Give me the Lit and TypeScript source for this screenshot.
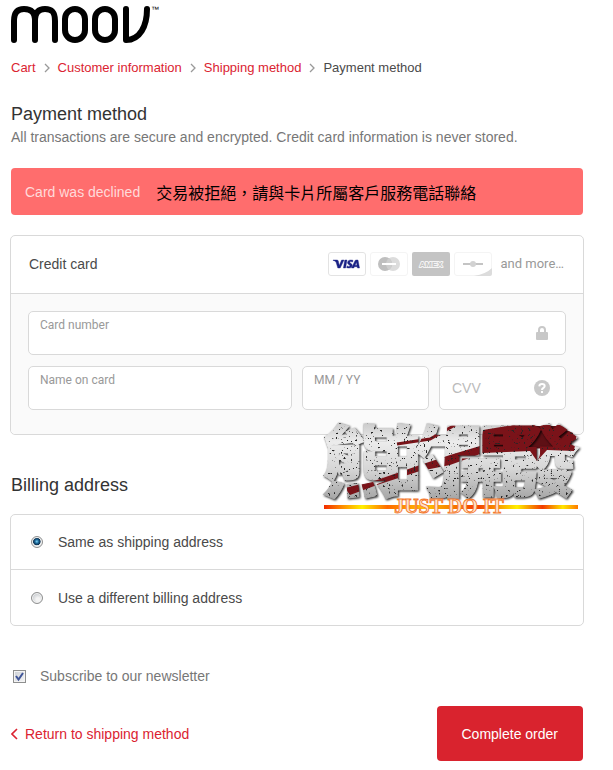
import { LitElement, html, css, svg } from "lit";
import { customElement, property, state } from "lit/decorators.js";

@customElement("crumb-trail")
class CrumbTrail extends LitElement {
  @property({ attribute: false }) steps: string[] = [];

  static styles = css`
    :host {
      display: block;
    }
    .trail {
      display: flex;
      align-items: center;
      gap: 7px;
      font-size: 13px;
      line-height: 20px;
    }
    .link {
      color: #db2331;
      text-decoration: none;
    }
    .current {
      color: #4a4a4a;
    }
    .arrow {
      width: 8px;
      height: 10px;
      fill: none;
      stroke: #999;
      stroke-width: 1.3;
    }
  `;

  render() {
    const last = this.steps.length - 1;
    return html`<nav class="trail" aria-label="Breadcrumb">
      ${this.steps.map((step, i) =>
        i === last
          ? html`<span class="current" aria-current="step">${step}</span>`
          : html`<a class="link" href="#">${step}</a>
              <svg class="arrow" viewBox="0 0 8 10"><path d="M2 1 L6 5 L2 9" /></svg>`
      )}
    </nav>`;
  }
}

@customElement("stamp-mark")
class StampMark extends LitElement {
  static styles = css`
    :host {
      display: block;
    }
    .mark {
      display: block;
      width: 264px;
      height: 100px;
      overflow: visible;
    }
    .glyphs {
      font: 900 78px "Noto Sans CJK TC", sans-serif;
    }
    .motto {
      font: 700 20px "Liberation Serif", serif;
    }
  `;

  render() {
    return html`<svg class="mark" viewBox="0 0 264 100" role="img" aria-label="熊的開發 JUST DO IT">
      ${svg`
      <defs>
        <linearGradient id="metal" x1="0" y1="0" x2="0" y2="1">
          <stop offset="0" stop-color="#bdbdbd" />
          <stop offset="0.3" stop-color="#ececec" />
          <stop offset="0.6" stop-color="#d6d6d6" />
          <stop offset="1" stop-color="#9c9c9c" />
        </linearGradient>
        <pattern id="surface" patternUnits="userSpaceOnUse" x="0" y="0" width="270" height="90">
          <rect width="270" height="90" fill="url(#metal)" />
          <path fill="#7a1319" d="M162 15 L192 10 L239 10 L256 18 L253 36 L226 35 L216 46 L209 36 L162 38 L129 50 L99 56 L56 70 L29 80 L24 73 L56 65 L99 50 L129 40 L159 31 Z" />
          <path fill="none" stroke="#7a1319" stroke-width="3" d="M76 29 L109 24 L134 10" />
        </pattern>
        <linearGradient id="flame" x1="0" x2="1">
          <stop offset="0" stop-color="#f22c00" />
          <stop offset="0.07" stop-color="#ff8a00" />
          <stop offset="0.15" stop-color="#fff000" />
          <stop offset="0.25" stop-color="#ff6a00" />
          <stop offset="0.4" stop-color="#ffc400" />
          <stop offset="0.6" stop-color="#f23a00" />
          <stop offset="0.76" stop-color="#fff000" />
          <stop offset="0.86" stop-color="#f23a00" />
          <stop offset="0.94" stop-color="#ffe600" />
          <stop offset="1" stop-color="#ff7a00" />
        </linearGradient>
        <filter id="worn" x="-0.05" y="-0.1" width="1.1" height="1.2" color-interpolation-filters="sRGB">
          <feTurbulence type="fractalNoise" baseFrequency="0.4" numOctaves="2" seed="7" />
          <feColorMatrix type="matrix" values="0 0 0 0 0.15  0 0 0 0 0.15  0 0 0 0 0.15  0 0 0 14 -9.5" />
          <feComposite in2="SourceAlpha" operator="in" result="specks" />
          <feMerge result="face">
            <feMergeNode in="SourceGraphic" />
            <feMergeNode in="specks" />
          </feMerge>
          <feDropShadow in="face" dx="1" dy="1" stdDeviation="0.8" flood-color="#000" flood-opacity="0.9" />
        </filter>
      </defs>
      <path fill="#5e1015" d="M164 16 L192 11 L236 11 L252 18 L250 32 L226 33 L209 34 L164 36 Z" />
      <text class="glyphs" x="1 61 121 181" y="76" fill="url(#surface)" stroke="url(#surface)" stroke-width="1" filter="url(#worn)">熊的開發</text>
      <rect x="3" y="90" width="254" height="4" fill="url(#flame)" />
      <text class="motto" x="128" y="98" text-anchor="middle" fill="#ffe2c8" stroke="#f47a30" stroke-width="0.9">JUST DO IT</text>
      `}
    </svg>`;
  }
}

@customElement("app-root")
class AppRoot extends LitElement {
  @state() private billing = "same";

  static styles = css`
    :host {
      display: block;
      box-sizing: border-box;
      min-height: 100vh;
      padding: 4px 30px 9px 11px;
      background: #fff;
      color: #4a4a4a;
      font: 14px/20px "Liberation Sans", Arial, sans-serif;
    }
    * {
      box-sizing: border-box;
    }
    .logo {
      display: block;
      width: 150px;
      height: 40px;
      margin-bottom: 14px;
    }
    .stroke {
      fill: none;
      stroke: #000;
      stroke-width: 6;
      stroke-linecap: round;
      stroke-linejoin: round;
    }
    .tm {
      font: 8px "Liberation Sans", Arial, sans-serif;
    }
    .title {
      margin: 0;
      font-size: 18px;
      line-height: 24px;
      font-weight: 400;
      color: #333;
    }
    .pay {
      margin-top: 24px;
    }
    .note {
      margin: 0;
      line-height: 22px;
      color: #777;
    }
    .alert {
      display: flex;
      align-items: center;
      gap: 16px;
      min-height: 47px;
      margin-top: 20px;
      padding: 4px 14px;
      border-radius: 4px;
      background: #ff6d6d;
      color: #ffdada;
    }
    .advice {
      font-family: "Noto Sans CJK TC", sans-serif;
      font-size: 16px;
      line-height: 24px;
      color: #000;
    }
    .panel {
      margin: 20px -1px 0;
      border: 1px solid #d9d9d9;
      border-radius: 5px;
    }
    .head {
      display: flex;
      align-items: center;
      justify-content: space-between;
      height: 58px;
      padding: 0 19px 1px 18px;
      border-bottom: 1px solid #d9d9d9;
    }
    .brands {
      display: flex;
      align-items: center;
      gap: 4px;
    }
    .brand {
      width: 38px;
      height: 24px;
    }
    .amex {
      font: 700 8px "Liberation Sans", Arial, sans-serif;
      fill: #c4c4c4;
      stroke: #f4f4f4;
      stroke-width: 2;
      stroke-linejoin: round;
      paint-order: stroke;
    }
    .more {
      margin-left: 5px;
      font: 13px/20px Roboto, sans-serif;
      color: #999;
    }
    .fields {
      display: grid;
      grid-template-columns: repeat(4, minmax(0, 1fr));
      gap: 11px 10px;
      padding: 17px 17px 24px;
      border-radius: 0 0 5px 5px;
      background: #fafafa;
    }
    .field {
      display: flex;
      align-items: center;
      position: relative;
      height: 44px;
      border: 1px solid #d9d9d9;
      border-radius: 5px;
      background: #fff;
    }
    .wide {
      grid-column: span 4;
    }
    .half {
      grid-column: span 2;
    }
    .caption {
      position: absolute;
      top: 4px;
      left: 11px;
      font: 12px/18px Roboto, sans-serif;
      white-space: nowrap;
      color: #999;
    }
    .input {
      flex: 1;
      min-width: 0;
      height: 42px;
      padding: 0 12px;
      border: 0;
      background: none;
      font: 14px/20px "Liberation Sans", Arial, sans-serif;
      color: #333;
      outline: none;
    }
    .input::placeholder {
      color: #bbb;
      opacity: 1;
    }
    .glyph {
      flex: none;
      width: 16px;
      height: 16px;
      margin-right: 15px;
    }
    .billing {
      position: relative;
      margin-top: 38px;
    }
    .stamp {
      position: absolute;
      right: -2px;
      bottom: -18px;
      z-index: 1;
      pointer-events: none;
    }
    .option {
      display: flex;
      align-items: center;
      gap: 15px;
      height: 54px;
      padding: 0 20px;
    }
    .option + .option {
      height: 56px;
      border-top: 1px solid #d9d9d9;
    }
    .choices {
      margin-top: 17px;
    }
    .radio {
      appearance: none;
      width: 12px;
      height: 12px;
      margin: 0;
      border: 1px solid #8e8f8f;
      border-radius: 50%;
      background: radial-gradient(circle at 60% 65%, #f4f4f4 20%, #c4c8cc 75%);
      box-shadow: inset 0 0 0 1px #f4f4f4;
    }
    .radio:checked {
      background: radial-gradient(circle at 48% 45%, #7fd4f5 0, #1c6a9c 24%, #0d2f4d 46%, #e4e8ea 54%);
    }
    .news {
      display: flex;
      align-items: center;
      gap: 14px;
      margin-top: 40px;
      padding-left: 2px;
      color: #777;
    }
    .tickbox {
      display: grid;
      width: 13px;
      height: 13px;
    }
    .tickbox > * {
      grid-area: 1 / 1;
    }
    .check {
      appearance: none;
      width: 13px;
      height: 13px;
      margin: 0;
      border: 1px solid #8e8f8f;
      background: linear-gradient(135deg, #cbcfd5, #f6f6f6);
      box-shadow: inset 0 0 0 1px #f4f4f4;
    }
    .tick {
      width: 13px;
      height: 13px;
      fill: none;
      stroke: #3f5598;
      stroke-width: 2;
      pointer-events: none;
      visibility: hidden;
    }
    .check:checked + .tick {
      visibility: visible;
    }
    .actions {
      display: flex;
      align-items: center;
      justify-content: space-between;
      margin-top: 20px;
    }
    .back {
      display: flex;
      align-items: center;
      gap: 6px;
      color: #db2331;
      text-decoration: none;
    }
    .chevron {
      width: 8px;
      height: 12px;
      fill: none;
      stroke: #db2331;
      stroke-width: 1.6;
    }
    .submit {
      height: 55px;
      padding: 0 25px;
      border: 0;
      border-radius: 4px;
      background: #d9232e;
      color: #fff;
      font: 14px/20px "Liberation Sans", Arial, sans-serif;
    }
  `;

  private choice(value: string, label: string) {
    return html`<label class="option">
      <input
        class="radio"
        type="radio"
        name="billing"
        value=${value}
        .checked=${this.billing === value}
        @change=${() => (this.billing = value)}
      />
      <span>${label}</span>
    </label>`;
  }

  render() {
    return html`
      <svg class="logo" viewBox="0 0 150 40" overflow="visible" role="img" aria-label="moov">
        <path class="stroke" d="M3 36 V17 C3 8 7 5 13 5 C20 5 24 8 24 17 V36 M24 17 C24 8 28 5 34 5 C41 5 44 8 44 17 V36" />
        <rect class="stroke" x="54" y="5" width="20" height="31" rx="10" />
        <rect class="stroke" x="84" y="5" width="20" height="31" rx="10" />
        <path class="stroke" d="M115 5 V36 C129 36 136 22 136 5" />
        <text class="tm" x="140" y="8">™</text>
      </svg>
      <crumb-trail .steps=${["Cart", "Customer information", "Shipping method", "Payment method"]}></crumb-trail>

      <h2 class="title pay">Payment method</h2>
      <p class="note">All transactions are secure and encrypted. Credit card information is never stored.</p>

      <div class="alert" role="alert">
        <span>Card was declined</span>
        <span class="advice" lang="zh-Hant">交易被拒絕，請與卡片所屬客戶服務電話聯絡</span>
      </div>

      <section class="panel">
        <div class="head">
          <span>Credit card</span>
          <div class="brands">
            <svg class="brand" viewBox="0 0 38 24" role="img" aria-label="Visa">
              <rect x="0.5" y="0.5" width="37" height="23" rx="2.5" fill="#fff" stroke="#e3e3e3" />
              <path fill="#1a2286" stroke="#1a2286" stroke-width="0.4" d="M5 8 H9 Q10 8 10.3 9 L11.3 13.5 L13.6 8 H16 L12.2 16 H9.8 L8 10 Q7 8.8 5 8.3 Z M16.8 8 H19 L17.6 16 H15.4 Z M25 8.3 L24.6 10 Q21.8 9.1 21.7 10.3 Q21.8 10.9 23 11.5 Q24.6 12.3 24.2 13.9 Q23.5 16.9 18.7 15.7 L19.1 13.9 Q21.7 15 22 13.8 Q22 13.2 20.9 12.7 Q19.2 11.8 19.5 10.3 Q20.3 7.2 25 8.3 Z M28 8 H30 L31.5 16 H29.5 L29.2 14.7 H26.4 L25.8 16 H23.5 L27 8.7 Q27.3 8 28 8 Z M28.4 10.3 L27.1 13.2 H29 Z" />
            </svg>
            <svg class="brand" viewBox="0 0 38 24" role="img" aria-label="Mastercard">
              <rect x="0.5" y="0.5" width="37" height="23" rx="2.5" fill="#fff" stroke="#f4f4f4" />
              <circle cx="23" cy="12" r="7" fill="#dcdcdc" />
              <circle cx="15" cy="12" r="7" fill="#bfbfbf" />
              <path fill="#cecece" d="M19 6.3 A7 7 0 0 1 19 17.7 A7 7 0 0 1 19 6.3 Z" />
              <rect x="12" y="11" width="14" height="2" fill="#fff" />
            </svg>
            <svg class="brand" viewBox="0 0 38 24" role="img" aria-label="American Express">
              <rect width="38" height="24" rx="2" fill="#c4c4c4" />
              <text class="amex" x="19" y="15" text-anchor="middle">AMEX</text>
            </svg>
            <svg class="brand" viewBox="0 0 38 24" role="img" aria-label="Discover">
              <rect x="0.5" y="0.5" width="37" height="23" rx="2.5" fill="#fff" stroke="#f4f4f4" />
              <path fill="#dcdcdc" d="M38 16 V22 Q38 24 36 24 H20 Q32 22 38 16 Z" />
              <rect x="9" y="11" width="20" height="2" fill="#c4c4c4" />
              <circle cx="19" cy="12" r="3" fill="#d2d2d2" />
            </svg>
            <span class="more">and more…</span>
          </div>
        </div>
        <div class="fields">
          <div class="field wide">
            <label class="caption" for="number">Card number</label>
            <input class="input" id="number" inputmode="numeric" />
            <svg class="glyph" viewBox="0 0 16 16" aria-hidden="true">
              <rect x="2" y="7" width="12" height="8" rx="1" fill="#c8c8c8" />
              <path fill="none" stroke="#c8c8c8" stroke-width="2" d="M5 8 V5 A3 3 0 0 1 11 5 V8" />
            </svg>
          </div>
          <div class="field half">
            <label class="caption" for="holder">Name on card</label>
            <input class="input" id="holder" />
          </div>
          <div class="field">
            <label class="caption" for="expiry">MM / YY</label>
            <input class="input" id="expiry" />
          </div>
          <div class="field">
            <input class="input" id="cvv" aria-label="CVV" placeholder="CVV" />
            <svg class="glyph" viewBox="0 0 16 16" aria-hidden="true">
              <circle cx="8" cy="8" r="8" fill="#c8c8c8" />
              <path fill="none" stroke="#fff" stroke-width="2" d="M5.3 6.3 Q5.5 4 8 4 Q10.7 4 10.7 6.1 Q10.7 7.3 9.3 8 Q8 8.6 8 10" />
              <rect x="7" y="11" width="2" height="2" fill="#fff" />
            </svg>
          </div>
        </div>
      </section>

      <div class="billing">
        <h2 class="title">Billing address</h2>
        <stamp-mark class="stamp"></stamp-mark>
      </div>
      <section class="panel choices">
        ${this.choice("same", "Same as shipping address")}
        ${this.choice("other", "Use a different billing address")}
      </section>

      <label class="news">
        <span class="tickbox">
          <input class="check" type="checkbox" checked />
          <svg class="tick" viewBox="0 0 13 13" aria-hidden="true"><path d="M3 6 L5.5 9.5 L10 3" /></svg>
        </span>
        <span>Subscribe to our newsletter</span>
      </label>

      <div class="actions">
        <a class="back" href="#">
          <svg class="chevron" viewBox="0 0 8 12" aria-hidden="true"><path d="M6 1 L1 6 L6 11" /></svg>
          <span>Return to shipping method</span>
        </a>
        <button class="submit" type="button">Complete order</button>
      </div>
    `;
  }
}
